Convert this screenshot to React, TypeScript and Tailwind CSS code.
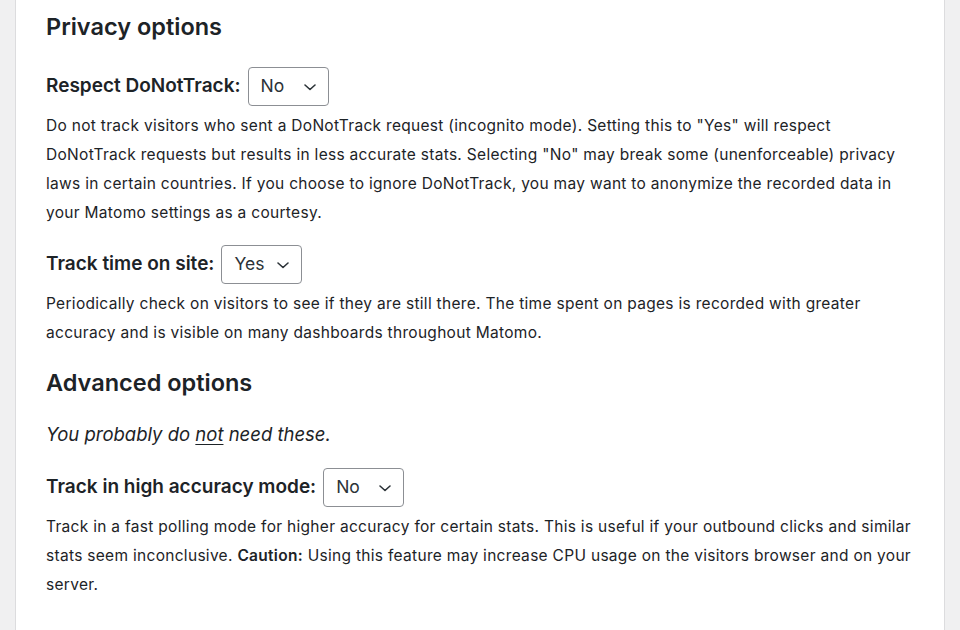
import type { ReactNode } from "react";

function Select({ value }: { value: string }) {
  return (
    <div className="ml-[7px] inline-flex h-[39px] w-[81px] items-center justify-between rounded-[4px] border border-[#8c8f94] bg-white pl-3 pr-[10px] text-[17.5px] text-[#2c3338]">
      <span>{value}</span>
      <svg width="16" height="16" viewBox="0 0 16 16" fill="none" className="mt-[1px]">
        <path d="M3 6l5 4.5L13 6" stroke="#2c3338" strokeWidth="1.6" strokeLinecap="round" strokeLinejoin="round" />
      </svg>
    </div>
  );
}

function Field({ label, value, top, children }: { label: string; value: string; top: string; children: ReactNode }) {
  return (
    <div className={top}>
      <div className="flex items-center">
        <span className="text-[19px] font-semibold text-[#1d2327]">{label}</span>
        <Select value={value} />
      </div>
      <p className="mt-[5px] text-[15.5px] leading-[29px] tracking-[0.3px] text-[#1d2327]">{children}</p>
    </div>
  );
}

export default function App() {
  return (
    <div
      className="flex h-[630px] overflow-hidden bg-[#f0f0f1] pl-[15px] pr-[15px]"
      style={{ fontFamily: "Inter, 'Noto Sans', sans-serif" }}
    >
      <div className="w-[930px] border-x border-[#dcdcde] bg-white pl-[30px] pr-[30px]">
        <h2 className="mt-[12px] text-[23.5px] font-semibold leading-[30px] text-[#1d2327]">Privacy options</h2>
        <Field top="mt-[25px]" label="Respect DoNotTrack:" value="No">
          Do not track visitors who sent a DoNotTrack request (incognito mode). Setting this to "Yes" will respect
          DoNotTrack requests but results in less accurate stats. Selecting "No" may break some (unenforceable) privacy
          laws in certain countries. If you choose to ignore DoNotTrack, you may want to anonymize the recorded data in
          your Matomo settings as a courtesy.
        </Field>
        <Field top="mt-[18px]" label="Track time on site:" value="Yes">
          Periodically check on visitors to see if they are still there. The time spent on pages is recorded with greater
          accuracy and is visible on many dashboards throughout Matomo.
        </Field>
        <h2 className="mt-[21px] text-[23.5px] font-semibold leading-[30px] text-[#1d2327]">Advanced options</h2>
        <p className="mt-[22px] text-[18.5px] italic leading-[29px] text-[#1d2327]">
          You probably do <span className="underline underline-offset-[3px]">not</span> need these.
        </p>
        <Field top="mt-[19px]" label="Track in high accuracy mode:" value="No">
          Track in a fast polling mode for higher accuracy for certain stats. This is useful if your outbound clicks and
          similar stats seem inconclusive. <strong className="font-semibold">Caution:</strong> Using this feature may
          increase CPU usage on the visitors browser and on your server.
        </Field>
      </div>
    </div>
  );
}
